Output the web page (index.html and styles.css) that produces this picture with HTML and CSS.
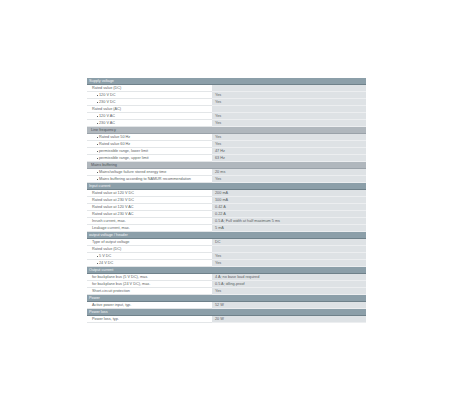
FILE: index.html
```html
<!DOCTYPE html>
<html>
<head>
<meta charset="utf-8">
<link rel="stylesheet" href="styles.css">
</head>
<body>
<div class="page">
  <div class="spec">
    <div class="row head"><span>Supply voltage</span></div>
    <div class="row"><span class="lbl">Rated value (DC)</span><span class="val"></span></div>
    <div class="row"><span class="lbl sub">120 V DC</span><span class="val">Yes</span></div>
    <div class="row"><span class="lbl sub">230 V DC</span><span class="val">Yes</span></div>
    <div class="row"><span class="lbl">Rated value (AC)</span><span class="val"></span></div>
    <div class="row"><span class="lbl sub">120 V AC</span><span class="val">Yes</span></div>
    <div class="row"><span class="lbl sub">230 V AC</span><span class="val">Yes</span></div>
    <div class="row group"><span>Line frequency</span></div>
    <div class="row"><span class="lbl sub">Rated value 50 Hz</span><span class="val">Yes</span></div>
    <div class="row"><span class="lbl sub">Rated value 60 Hz</span><span class="val">Yes</span></div>
    <div class="row"><span class="lbl sub">permissible range, lower limit</span><span class="val">47 Hz</span></div>
    <div class="row"><span class="lbl sub">permissible range, upper limit</span><span class="val">63 Hz</span></div>
    <div class="row group"><span>Mains buffering</span></div>
    <div class="row"><span class="lbl sub">Mains/voltage failure stored energy time</span><span class="val">20 ms</span></div>
    <div class="row"><span class="lbl sub">Mains buffering according to NAMUR recommendation</span><span class="val">Yes</span></div>
    <div class="row head"><span>Input current</span></div>
    <div class="row"><span class="lbl">Rated value at 120 V DC</span><span class="val">200 mA</span></div>
    <div class="row"><span class="lbl">Rated value at 230 V DC</span><span class="val">100 mA</span></div>
    <div class="row"><span class="lbl">Rated value at 120 V AC</span><span class="val">0.42 A</span></div>
    <div class="row"><span class="lbl">Rated value at 230 V AC</span><span class="val">0.22 A</span></div>
    <div class="row"><span class="lbl">Inrush current, max.</span><span class="val">0.5 A; Full width at half maximum 5 ms</span></div>
    <div class="row"><span class="lbl">Leakage current, max.</span><span class="val">5 mA</span></div>
    <div class="row head"><span>output voltage / header</span></div>
    <div class="row"><span class="lbl">Type of output voltage</span><span class="val">DC</span></div>
    <div class="row"><span class="lbl">Rated value (DC)</span><span class="val"></span></div>
    <div class="row"><span class="lbl sub">5 V DC</span><span class="val">Yes</span></div>
    <div class="row"><span class="lbl sub">24 V DC</span><span class="val">Yes</span></div>
    <div class="row head"><span>Output current</span></div>
    <div class="row"><span class="lbl">for backplane bus (5 V DC), max.</span><span class="val">4 A; no base load required</span></div>
    <div class="row"><span class="lbl">for backplane bus (24 V DC), max.</span><span class="val">0.5 A; idling-proof</span></div>
    <div class="row"><span class="lbl">Short-circuit protection</span><span class="val">Yes</span></div>
    <div class="row head"><span>Power</span></div>
    <div class="row"><span class="lbl">Active power input, typ.</span><span class="val">52 W</span></div>
    <div class="row head"><span>Power loss</span></div>
    <div class="row"><span class="lbl">Power loss, typ.</span><span class="val">20 W</span></div>
  </div>
</div>
</body>
</html>
```
FILE: styles.css
```css
html, body {
  margin: 0;
  padding: 0;
  background: #ffffff;
}
.page {
  padding: 78px 0 0 87px;
  font-family: "Liberation Sans", Arial, sans-serif;
}
.spec {
  width: 279px;
  display: flex;
  flex-direction: column;
}
.row {
  display: grid;
  grid-template-columns: 125px 1fr;
  height: 7px;
  font-size: 3.8px;
  line-height: 6px;
  color: #5a5f63;
}
.row > span {
  white-space: nowrap;
  overflow: hidden;
}
.lbl {
  background: #ffffff;
  border-bottom: 1px solid #e3e6e8;
  padding-left: 5px;
}
.lbl.sub {
  position: relative;
  padding-left: 12px;
}
.lbl.sub::before {
  content: "";
  position: absolute;
  left: 10px;
  top: 2.5px;
  width: 1.2px;
  height: 1.2px;
  background: #5a5f63;
}
.val {
  background: #dee2e5;
  border-bottom: 1px solid #eceef0;
  padding-left: 3px;
}
.head {
  grid-template-columns: 1fr;
  background: #8c9fa9;
  border-bottom: 1px solid #6f818a;
  height: 6px;
  color: #f4f6f7;
}
.head > span {
  padding-left: 2px;
}
.group {
  grid-template-columns: 1fr;
  background: #b0b7bd;
  border-bottom: 1px solid #9aa2a9;
  height: 6px;
  color: #4d5358;
}
.group > span {
  padding-left: 4px;
}
```
